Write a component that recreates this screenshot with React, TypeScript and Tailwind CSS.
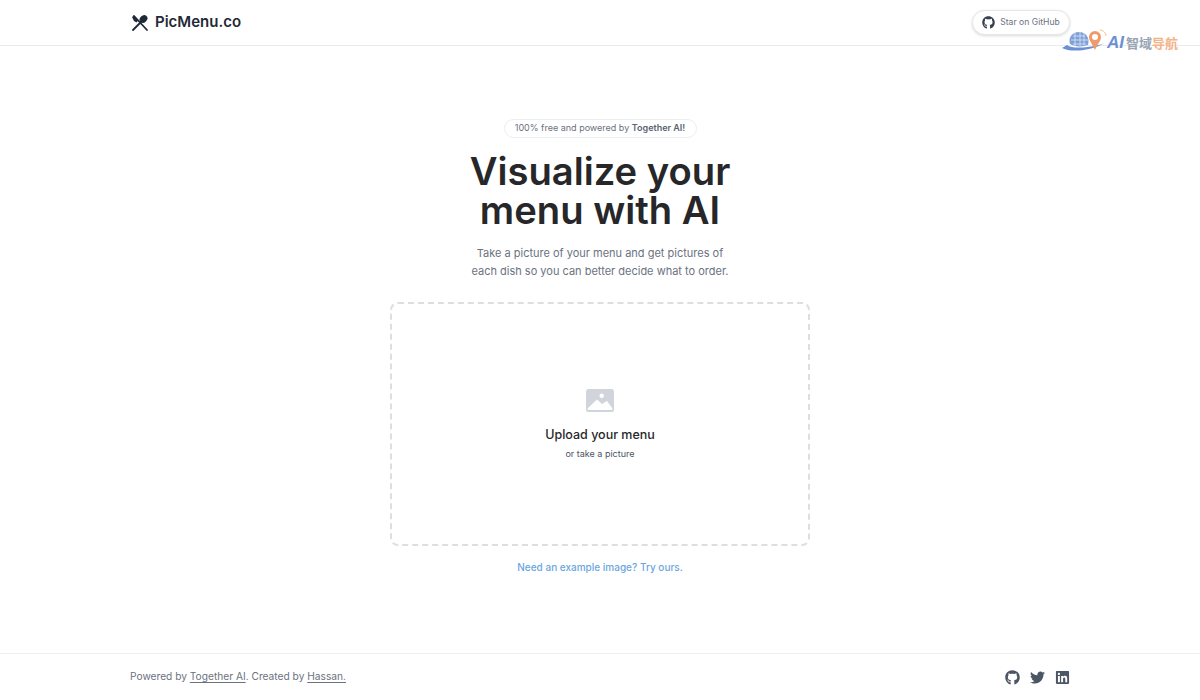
import { FaGithub, FaTwitter, FaLinkedin } from 'react-icons/fa';

const Logo = () => (
	<svg width="18" height="18" viewBox="0 0 18 18" fill="none" className="ml-[1px] mt-[1px] shrink-0">
		<path d="M3 2 L16 16" stroke="#1f2937" strokeWidth="1.800" strokeLinecap="round" />
		<path d="M1 3 L3 1.500 L7.500 6 L5.500 8.500 L3 7 Z" fill="#1f2937" />
		<path d="M2 16 L10 8" stroke="#1f2937" strokeWidth="1.800" strokeLinecap="round" />
		<ellipse cx="12.500" cy="5" rx="3.400" ry="4.200" transform="rotate(45 12.500 5)" fill="#1f2937" />
	</svg>
);

const Watermark = () => (
	<div className="absolute left-[1061px] top-[29px] flex h-[23px] items-center">
		<svg width="46" height="23" viewBox="0 0 46 23" className="shrink-0">
			<path d="M1 19 C8 23 28 23 44 14 C34 18 12 21 6 16 Z" fill="#6d8fd6" />
			<path d="M9 15 C7 9 11 3 18 3 C25 3 29 9 27 16 C21 18 14 18 9 15 Z" fill="#7fa1d8" />
			<path d="M12 7 L24 7 M10 11 L27 11 M12 15 L25 15 M14 4 L14 17 M19 3 L19 17 M23 4 L23 16" stroke="#dbe6f6" strokeWidth="0.800" />
			<path d="M34 2 a6 6 0 0 1 6 6 c0 4 -3.500 7 -6 13 c-2.500 -6 -6 -9 -6 -13 A6 6 0 0 1 34 2z" fill="#ef9a6b" />
			<circle cx="34" cy="8" r="3" fill="#fff" />
			<path d="M39 1 C42 1 45 4 45 7" stroke="#f3c08f" strokeWidth="1" fill="none" />
		</svg>
		<span className="mt-[4px] font-['Liberation_Sans',sans-serif] text-[17px] font-bold italic leading-none text-[#6d8fd6]">AI</span>
		<span className="ml-[2px] mt-[4px] font-['Noto_Sans_CJK_SC',sans-serif] text-[13px] font-bold leading-none text-[#9aa5b5]">智域</span>
		<span className="mt-[4px] font-['Noto_Sans_CJK_SC',sans-serif] text-[13px] font-bold leading-none text-[#f3b48a]">导航</span>
	</div>
);

export default function App() {
	return (
		<div className="relative flex h-[700px] flex-col overflow-hidden bg-white font-['Inter',sans-serif] text-[#1f2937]">
			<header className="h-[46px] shrink-0 border-b border-[#e8eaed]">
				<div className="mx-auto flex h-full w-[940px] items-center justify-between">
					<div className="flex items-center gap-[6px]">
						<Logo />
						<span className="mt-[-1px] text-[15px] font-semibold text-[#1f2937]">PicMenu.co</span>
					</div>
					<a className="flex h-[25px] w-[98px] items-center justify-center gap-[5px] rounded-full border border-[#e5e7eb] bg-white text-[8.600px] text-[#6b7280] shadow-[0_1px_3px_rgba(0,0,0,0.15)]">
						<FaGithub className="h-[13px] w-[13px] text-[#374151]" />
						Star on GitHub
					</a>
				</div>
			</header>
			<Watermark />

			<main className="flex flex-1 flex-col items-center pt-[73px]">
				<div className="flex h-[19px] w-[193px] items-center justify-center rounded-full border border-[#eceef1] text-[9px] text-[#6b7280]">
					<span className="mt-[-1px]">100% free and powered by <b className="font-semibold text-[#5b6472]">Together AI!</b></span>
				</div>
				<h1 className="mt-[14px] text-center text-[38.200px] font-semibold leading-[39px] text-[#27272a]">
					Visualize your
					<br />
					menu with AI
				</h1>
				<p className="mt-[14px] text-center text-[11px] leading-[18px] text-[#6b7280]">
					Take a picture of your menu and get pictures of
					<br />
					each dish so you can better decide what to order.
				</p>
				<div className="mt-[22px] flex h-[244px] w-[420px] flex-col items-center justify-center rounded-lg border-2 border-dashed border-[#dcdee2] pt-[4px]">
					<svg width="28" height="23" viewBox="0 0 28 23" className="mt-[-2px]">
						<rect width="28" height="23" rx="2.500" fill="#d1d5db" />
						<circle cx="15.700" cy="6.700" r="2.200" fill="#fff" />
						<path d="M1.500 19.500 L11 10.500 L16 15 L21 12 L26.500 19.500 Q26.500 21 25 21 L3 21 Q1.500 21 1.500 19.500Z" fill="#fff" />
					</svg>
					<p className="mt-[14px] text-[12.500px] font-medium leading-[18px] text-[#27272a]">Upload your menu</p>
					<p className="mt-[2px] text-[9px] leading-[15px] text-[#4b5563]">or take a picture</p>
				</div>
				<p className="mt-[14px] text-[10px] font-medium leading-[14px] text-[#6ba6e0]">Need an example image? Try ours.</p>
			</main>

			<footer className="h-[47px] shrink-0 border-t border-[#eceef0]">
				<div className="mx-auto flex h-full w-[940px] items-center justify-between">
					<p className="text-[10.200px] text-[#6b7280]">
						Powered by <a className="underline underline-offset-2">Together AI</a>. Created by <a className="underline underline-offset-2">Hassan.</a>
					</p>
					<div className="flex items-center gap-[10px] text-[#4b5563]">
						<FaGithub className="h-[15px] w-[15px]" />
						<FaTwitter className="h-[15px] w-[15px]" />
						<FaLinkedin className="h-[15px] w-[15px]" />
					</div>
				</div>
			</footer>
		</div>
	);
}
